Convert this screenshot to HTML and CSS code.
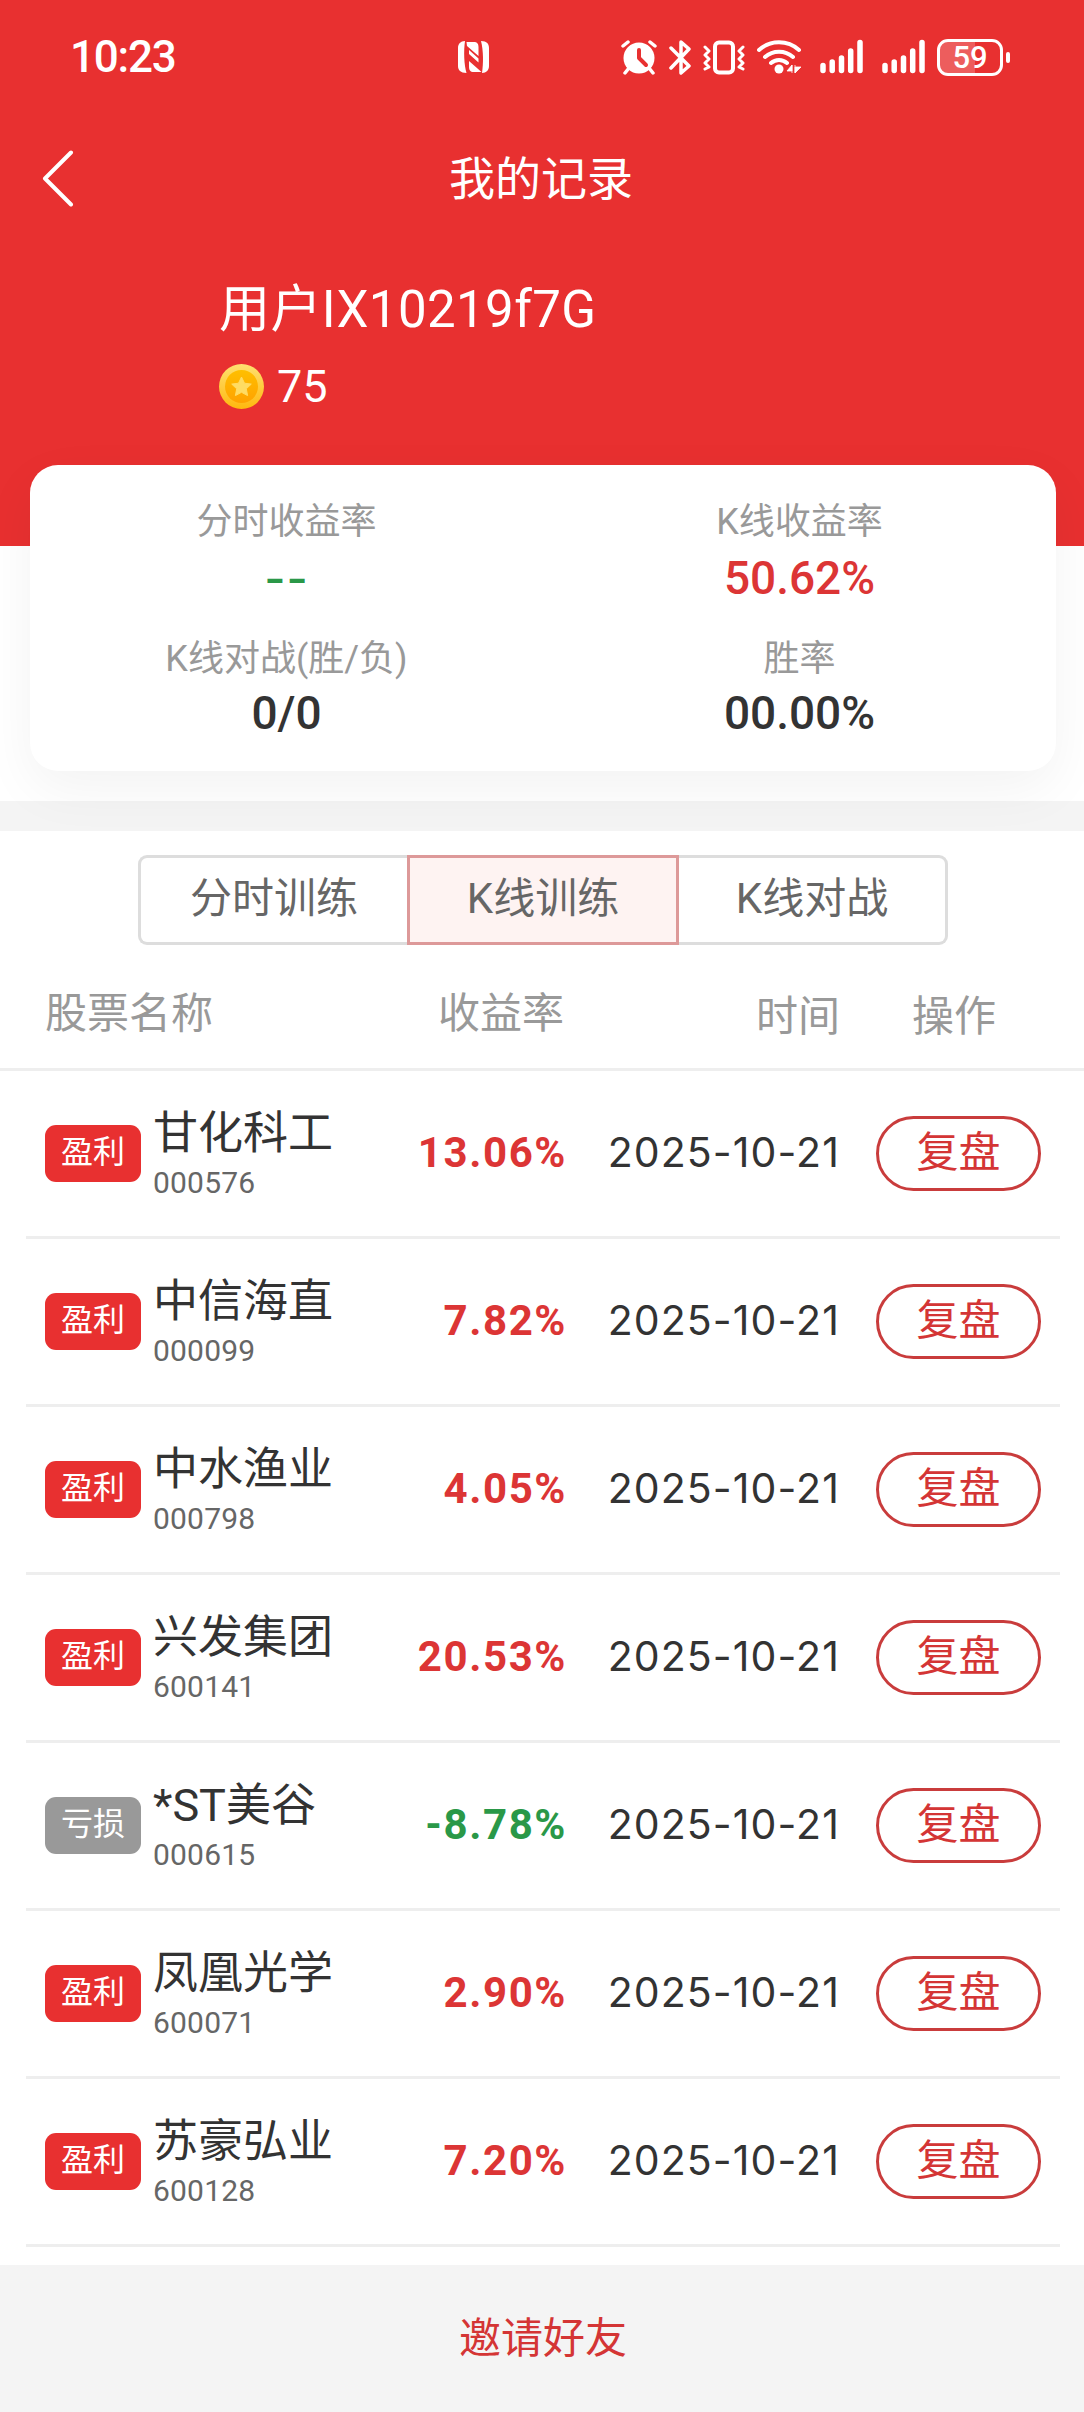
FILE: index.html
```html
<!DOCTYPE html>
<html lang="zh-CN">
<head>
  <meta charset="UTF-8" />
  <meta name="viewport" content="width=device-width, initial-scale=1" />
  <title>我的记录</title>
  <link rel="stylesheet" href="styles.css">
</head>
<body>

<header class="top">
  <div class="status-bar">
    <span class="clock">10:23</span>
    <svg class="nfc" width="31" height="32" viewBox="0 0 31 32" aria-hidden="true">
      <path d="M7 0C2.500 0 0 3 0 7v18c0 4 2.500 7 8.500 7C6 24 5.500 10 7 0zM8.500 1h7c4 0 5 2 5 5v9L9 5zM24 31h-8c-4 0-5-2-5-6v-5l12.500 11zM11 9l9.500 8.500v4L11 13zM23 0c6 0 8 3 8 7v18c0 4-2.500 7-7 7 1.500-10 1.500-22-1-32z" fill="#fff"/>
    </svg>
    <div class="status-icons">
      <svg class="alarm" width="36" height="38" viewBox="0 0 36 38" aria-hidden="true">
        <circle cx="18" cy="20" r="15.500" fill="#fff"/>
        <path d="M2 8l5-4M34 8l-5-4M8 30l-4 5M28 30l4 5" stroke="#fff" stroke-width="3.500" stroke-linecap="round"/>
        <path d="M18 12v8l7 7" fill="none" stroke="#e83030" stroke-width="4" stroke-linecap="round" stroke-linejoin="round"/>
      </svg>
      <svg class="bt" width="22" height="38" viewBox="0 0 22 38" aria-hidden="true">
        <path d="M2 10l18 18-8 7V4l8 7L2 30" fill="none" stroke="#fff" stroke-width="3.500" stroke-linecap="round" stroke-linejoin="round"/>
      </svg>
      <svg class="vibrate" width="42" height="38" viewBox="0 0 42 38" aria-hidden="true">
        <rect x="12" y="4.500" width="18" height="30" rx="4" fill="none" stroke="#fff" stroke-width="4"/>
        <path d="M2 9l4 4-4 4 4 4-4 4 4 4-4 2M40 9l-4 4 4 4-4 4 4 4-4 4 4 2" fill="none" stroke="#fff" stroke-width="3" stroke-linecap="round" stroke-linejoin="round"/>
      </svg>
      <svg class="wifi" width="44" height="38" viewBox="0 0 44 38" aria-hidden="true">
        <path d="M2 12a30 30 0 0 1 40 0M8 19a21 21 0 0 1 28 0M14 25a12 12 0 0 1 16 0" fill="none" stroke="#fff" stroke-width="4" stroke-linecap="round"/>
        <circle cx="22" cy="31" r="4.500" fill="#fff"/>
        <path d="M30 33h5v-6zM35 27v8M38 27v8M38 35l6-6h-6z" fill="#fff" stroke="#fff" stroke-width=".8"/>
      </svg>
      <svg class="signal" width="43" height="38" viewBox="0 0 43 38" aria-hidden="true">
        <path d="M3 27.500v5M12.200 24v8.500M21.500 20v12.500M30.700 13v19.500M40 4.500v28" stroke="#fff" stroke-width="5.500" stroke-linecap="round"/>
      </svg>
      <svg class="signal" width="43" height="38" viewBox="0 0 43 38" aria-hidden="true">
        <path d="M3 27.500v5M12.200 24v8.500M21.500 20v12.500M30.700 13v19.500M40 4.500v28" stroke="#fff" stroke-width="5.500" stroke-linecap="round"/>
      </svg>
      <div class="battery"><span>59</span></div>
    </div>
  </div>

  <nav class="title-bar">
    <svg class="back" width="32" height="57" viewBox="0 0 32 57" aria-label="返回">
      <path d="M29 2.500L3 28.500l26 26" fill="none" stroke="#fff" stroke-width="4" stroke-linecap="round" stroke-linejoin="round"/>
    </svg>
    <h1>我的记录</h1>
  </nav>

  <div class="user">
    <div class="user-name">用户IX10219f7G</div>
    <div class="coins">
      <svg width="45" height="45" viewBox="0 0 45 45" aria-hidden="true">
        <defs>
          <linearGradient id="coin-rim" x1="0" y1="0" x2="0" y2="1">
            <stop offset="0" stop-color="#ffe070"/>
            <stop offset="1" stop-color="#ffb80e"/>
          </linearGradient>
          <linearGradient id="coin-face" x1="0" y1="0" x2="0" y2="1">
            <stop offset="0" stop-color="#ffbf00"/>
            <stop offset="1" stop-color="#ffa200"/>
          </linearGradient>
        </defs>
        <circle cx="22.500" cy="22.500" r="22.500" fill="url(#coin-rim)"/>
        <circle cx="22.500" cy="22.500" r="16.500" fill="url(#coin-face)"/>
        <path d="M22.500 13l3 6.200 6.800.9-5 4.700 1.300 6.800-6.100-3.300-6.100 3.300 1.300-6.800-5-4.700 6.800-.9z" fill="#ffdc63" stroke="#ffdc63" stroke-linejoin="round"/>
      </svg>
      <span>75</span>
    </div>
  </div>
</header>

<section class="stats">
  <div class="stat">
    <div class="stat-label">分时收益率</div>
    <div class="stat-value down dashes">--</div>
  </div>
  <div class="stat">
    <div class="stat-label">K线收益率</div>
    <div class="stat-value up">50.62%</div>
  </div>
  <div class="stat">
    <div class="stat-label">K线对战(胜/负)</div>
    <div class="stat-value">0/0</div>
  </div>
  <div class="stat">
    <div class="stat-label">胜率</div>
    <div class="stat-value">00.00%</div>
  </div>
</section>

<div class="divider"></div>

<main>
  <div class="tabs" role="tablist">
    <div class="tab" role="tab">分时训练</div>
    <div class="tab active" role="tab" aria-selected="true">K线训练</div>
    <div class="tab" role="tab">K线对战</div>
  </div>

  <div class="list-head">
    <span class="col-name">股票名称</span>
    <span class="col-rate">收益率</span>
    <span class="col-date">时间</span>
    <span class="col-action">操作</span>
  </div>

  <ul class="list">
    <li class="row">
      <span class="badge">盈利</span>
      <div class="stock"><div class="name">甘化科工</div><div class="code">000576</div></div>
      <span class="rate up">13.06%</span>
      <span class="date">2025-10-21</span>
      <button type="button">复盘</button>
    </li>
    <li class="row">
      <span class="badge">盈利</span>
      <div class="stock"><div class="name">中信海直</div><div class="code">000099</div></div>
      <span class="rate up">7.82%</span>
      <span class="date">2025-10-21</span>
      <button type="button">复盘</button>
    </li>
    <li class="row">
      <span class="badge">盈利</span>
      <div class="stock"><div class="name">中水渔业</div><div class="code">000798</div></div>
      <span class="rate up">4.05%</span>
      <span class="date">2025-10-21</span>
      <button type="button">复盘</button>
    </li>
    <li class="row">
      <span class="badge">盈利</span>
      <div class="stock"><div class="name">兴发集团</div><div class="code">600141</div></div>
      <span class="rate up">20.53%</span>
      <span class="date">2025-10-21</span>
      <button type="button">复盘</button>
    </li>
    <li class="row">
      <span class="badge loss">亏损</span>
      <div class="stock"><div class="name">*ST美谷</div><div class="code">000615</div></div>
      <span class="rate down">-8.78%</span>
      <span class="date">2025-10-21</span>
      <button type="button">复盘</button>
    </li>
    <li class="row">
      <span class="badge">盈利</span>
      <div class="stock"><div class="name">凤凰光学</div><div class="code">600071</div></div>
      <span class="rate up">2.90%</span>
      <span class="date">2025-10-21</span>
      <button type="button">复盘</button>
    </li>
    <li class="row">
      <span class="badge">盈利</span>
      <div class="stock"><div class="name">苏豪弘业</div><div class="code">600128</div></div>
      <span class="rate up">7.20%</span>
      <span class="date">2025-10-21</span>
      <button type="button">复盘</button>
    </li>
  </ul>
</main>

<footer class="invite">邀请好友</footer>

</body>
</html>
```
FILE: styles.css
```css
* {
  box-sizing: border-box;
}
body {
  margin: 0;
  height: 2412px;
  display: flex;
  flex-direction: column;
  background: #fff;
  color: #333;
  font-family: Roboto, 'Noto Sans CJK SC', sans-serif;
}

/* header */
.top {
  height: 546px;
  flex: none;
  background: #e83030;
  color: #fff;
}
.status-bar {
  height: 114px;
  padding: 0 74px 0 70px;
  display: flex;
  align-items: center;
}
.clock {
  width: 388px;
  font-size: 44px;
  font-weight: 500;
  line-height: 52px;
  letter-spacing: -1.2px;
}
.status-icons {
  margin-left: auto;
  display: flex;
  align-items: center;
}
.status-icons svg {
  margin-right: 12px;
}
.status-icons .wifi,
.status-icons .signal {
  margin-right: 19px;
}
.status-icons .signal + .signal {
  margin-right: 12px;
}
.battery {
  position: relative;
  width: 66px;
  height: 37px;
  margin-right: 7px;
  border: 3px solid #fff;
  border-radius: 11px;
  background: linear-gradient(90deg, rgba(255,255,255,.22) 59%, transparent 59%);
  font-size: 31px;
  font-weight: 500;
  line-height: 31px;
  text-align: center;
}
.battery::after {
  content: "";
  position: absolute;
  right: -10px;
  top: 10px;
  width: 4px;
  height: 11px;
  border-radius: 2px;
  background: #fff;
}
.title-bar {
  height: 128px;
  padding: 0 42px;
  display: flex;
  align-items: center;
}
.title-bar h1 {
  flex: 1;
  margin: 2px 34px 0 0;
  font-size: 46px;
  font-weight: 400;
  line-height: 60px;
  text-align: center;
}
.user {
  padding: 31px 0 0 219px;
}
.user-name {
  font-size: 51px;
  line-height: 74px;
  letter-spacing: .4px;
}
.coins {
  margin-top: 9px;
  display: flex;
  align-items: center;
  gap: 13px;
  height: 60px;
  font-size: 45px;
}

/* summary card */
.stats {
  position: relative;
  flex: none;
  height: 306px;
  margin: -81px 28px 0 30px;
  padding-top: 28px;
  display: grid;
  grid-template-columns: 1fr 1fr;
  grid-auto-rows: 137px;
  border-radius: 28px;
  background: #fff;
  box-shadow: 0 18px 54px rgba(0,0,0,.05);
  text-align: center;
}
.stat-label {
  color: #999;
  font-size: 36px;
  line-height: 58px;
}
.stat-value {
  font-size: 46px;
  font-weight: 500;
  line-height: 54px;
}
.stat:nth-child(n+3) .stat-value {
  line-height: 50px;
}
.dashes {
  font-family: Inter, sans-serif;
  letter-spacing: 1px;
}
.up {
  color: #dc3535;
}
.down {
  color: #2a9848;
}
.divider {
  flex: none;
  height: 30px;
  margin-top: 30px;
  background: #f4f4f4;
}

/* tabs */
.tabs {
  width: 810px;
  height: 90px;
  margin: 24px 0 0 138px;
  display: flex;
}
.tab {
  flex: 1;
  border: 3px solid #ddd;
  color: #666;
  font-size: 42px;
  line-height: 82px;
  text-align: center;
}
.tab:first-child {
  border-right: none;
  border-radius: 9px 0 0 9px;
}
.tab:last-child {
  border-left: none;
  border-radius: 0 9px 9px 0;
}
.tab.active {
  border-color: #dd9999;
  background: #fef3f2;
}

/* records */
.list-head,
.row {
  display: grid;
  grid-template-columns: 108px 207px 206px 274px 201px;
  align-items: center;
}
.list-head {
  height: 126px;
  padding: 14px 43px 0 45px;
  border-bottom: 3px solid #eee;
  color: #999;
  font-size: 42px;
  line-height: 60px;
}
.col-name {
  grid-column: span 2;
}
.col-rate,
.col-date {
  text-align: right;
}
.col-rate {
  padding-right: 2px;
}
.col-date,
.col-action {
  padding-top: 6px;
}
.col-action {
  padding-left: 72px;
}
.list {
  margin: 0;
  padding: 0 24px 0 26px;
  list-style: none;
}
.row {
  height: 168px;
  padding: 0 19px;
  border-bottom: 3px solid #eee;
}
.badge {
  width: 96px;
  height: 57px;
  border-radius: 11px;
  background: #e83030;
  color: #fff;
  font-size: 32px;
  line-height: 55px;
  text-align: center;
}
.badge.loss {
  background: #999;
}
.name {
  font-size: 45px;
  line-height: 62px;
}
.code {
  color: #666;
  font-size: 30px;
  line-height: 36px;
  padding-bottom: 4px;
  letter-spacing: .2px;
}
.rate {
  padding-bottom: 3px;
  font-size: 42px;
  font-weight: 700;
  letter-spacing: 1.6px;
  margin-right: -1px;
  text-align: right;
}
.date {
  padding-bottom: 3px;
  font-family: Inter, sans-serif;
  font-size: 41px;
  letter-spacing: 1.1px;
  text-align: right;
}
.row button {
  justify-self: end;
  width: 165px;
  height: 75px;
  padding: 0 0 2px;
  border: 3px solid #c93c3c;
  border-radius: 38px;
  background: #fff;
  color: #d43535;
  font: inherit;
  font-size: 42px;
  line-height: 60px;
}

.invite {
  height: 147px;
  margin-top: auto;
  padding-left: 2px;
  background: #f4f4f4;
  color: #d43535;
  font-size: 42px;
  line-height: 147px;
  text-align: center;
}
```
